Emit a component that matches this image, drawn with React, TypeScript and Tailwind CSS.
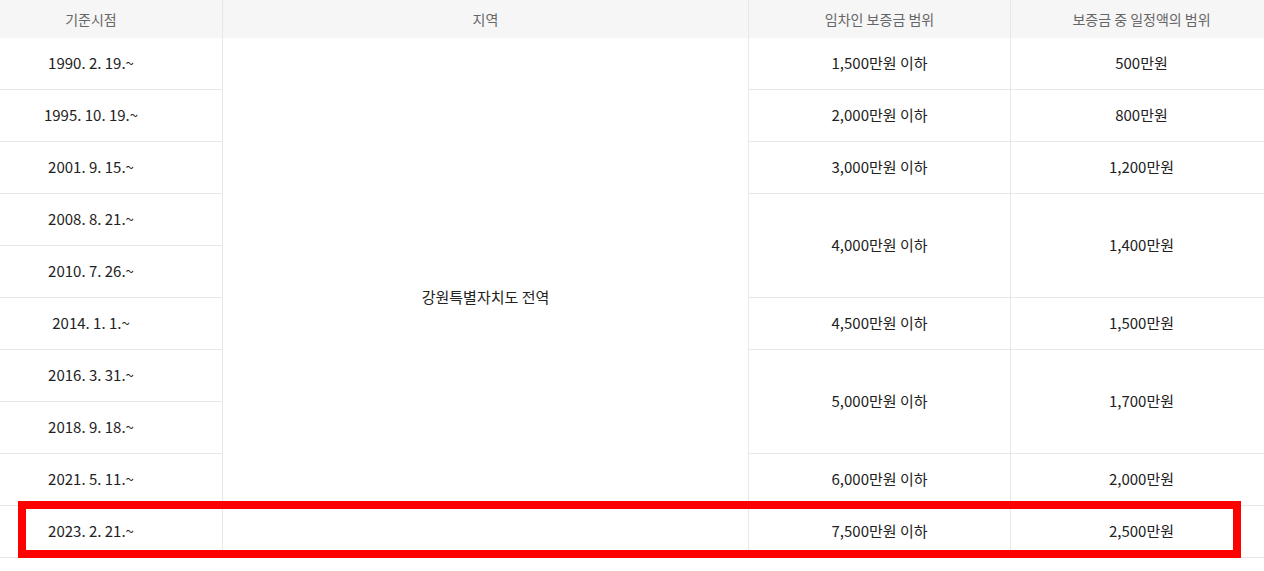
import React from 'react';

type Row = {
  date: string;
  deposit?: string;
  span?: number;
  amount?: string;
};

const rows: Row[] = [
  { date: '1990. 2. 19.~', deposit: '1,500만원 이하', amount: '500만원' },
  { date: '1995. 10. 19.~', deposit: '2,000만원 이하', amount: '800만원' },
  { date: '2001. 9. 15.~', deposit: '3,000만원 이하', amount: '1,200만원' },
  { date: '2008. 8. 21.~', deposit: '4,000만원 이하', span: 2, amount: '1,400만원' },
  { date: '2010. 7. 26.~' },
  { date: '2014. 1. 1.~', deposit: '4,500만원 이하', amount: '1,500만원' },
  { date: '2016. 3. 31.~', deposit: '5,000만원 이하', span: 2, amount: '1,700만원' },
  { date: '2018. 9. 18.~' },
  { date: '2021. 5. 11.~', deposit: '6,000만원 이하', amount: '2,000만원' },
  { date: '2023. 2. 21.~', deposit: '7,500만원 이하', amount: '2,500만원' },
];

const td = 'border-b border-[#e8e8e8] p-0 text-center align-middle';

export default function App() {
  return (
    <div
      className="relative w-full overflow-hidden bg-white pb-[13px] text-[15px] text-[#222]"
      style={{ fontFamily: '"Noto Sans CJK KR", "Noto Sans", sans-serif' }}
    >
      {/* table is wider than the viewport: clipped 40px left, 8px right */}
      <table className="ml-[-40px] w-[1312px] table-fixed border-separate border-spacing-0">
        <colgroup>
          <col className="w-[262px]" />
          <col className="w-[526px]" />
          <col className="w-[262px]" />
          <col className="w-[262px]" />
        </colgroup>
        <thead>
          <tr className="h-[38px] bg-[#f6f6f6] text-[14px] text-[#666]">
            <th className="p-0 font-normal">기준시점</th>
            <th className="border-l border-[#e8e8e8] p-0 font-normal">지역</th>
            <th className="border-l border-[#e8e8e8] p-0 font-normal">임차인 보증금 범위</th>
            <th className="border-l border-[#e8e8e8] p-0 font-normal">보증금 중 일정액의 범위</th>
          </tr>
        </thead>
        <tbody>
          {rows.map((r, i) => (
            <tr key={r.date} className="h-[52px]">
              <td className={td}>{r.date}</td>
              {i === 0 && (
                <td rowSpan={10} className={`${td} border-l`}>
                  강원특별자치도 전역
                </td>
              )}
              {r.deposit && (
                <td rowSpan={r.span ?? 1} className={`${td} border-l`}>
                  {r.deposit}
                </td>
              )}
              {r.amount && (
                <td rowSpan={r.span ?? 1} className={`${td} border-l`}>
                  {r.amount}
                </td>
              )}
            </tr>
          ))}
        </tbody>
      </table>

      {/* highlight box over the latest row */}
      <div className="pointer-events-none absolute left-[18px] top-[501px] h-[57px] w-[1223px] border-[8px] border-[#ff0000]" />
    </div>
  );
}
